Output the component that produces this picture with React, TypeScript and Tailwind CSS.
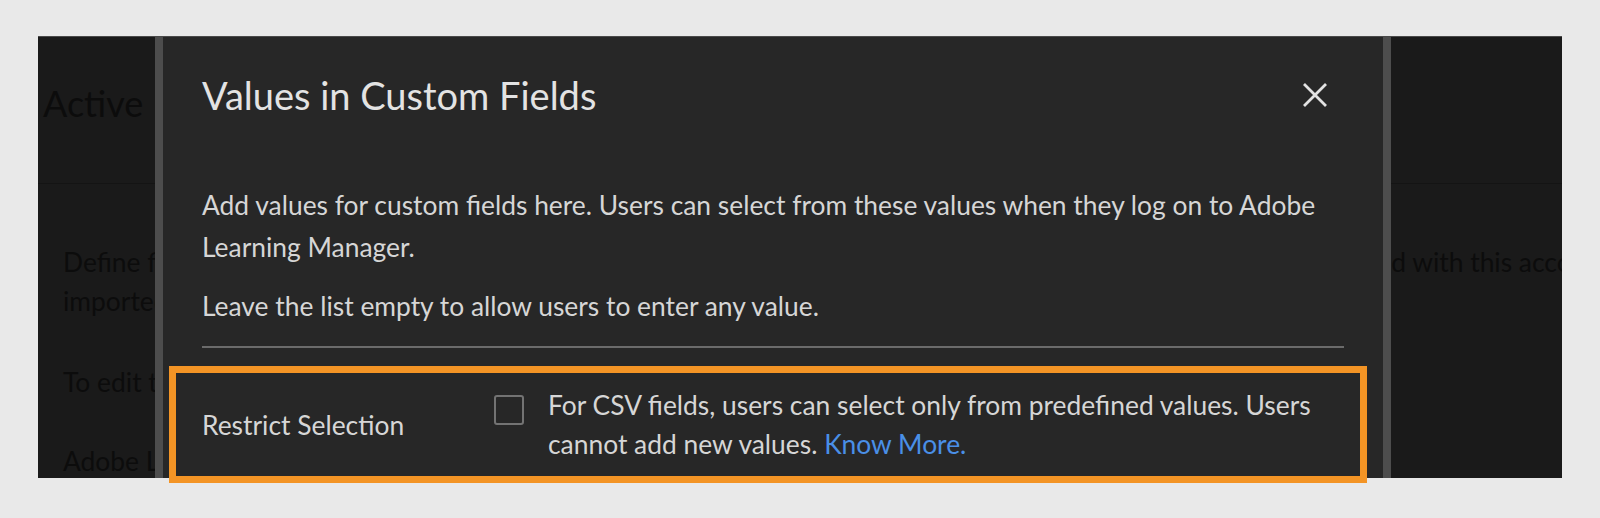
export default function App() {
  return (
    <div className="relative w-[1600px] h-[518px] bg-[#e9e9e9] pt-[36px] pl-[38px] font-['Lato',sans-serif]">
      <div className="relative w-[1524px] h-[442px] overflow-hidden bg-[#1a1a1a] border-t border-[#4a4a4a]">
        <div className="text-[#0c0c0c]">
          <div className="h-[147px] border-b border-[#141414] pl-[5px] pt-[44px] text-[36px] leading-[44px] whitespace-nowrap">
            Active Fields
          </div>
          <div className="pl-[25px] pt-[59px] text-[26.4px] leading-[39px]">
            <p className="whitespace-nowrap">
              Define fields that you want to add to the user profiles. These fields can be set by the administrators or are associated with this account
            </p>
            <p className="whitespace-nowrap">imported from external sources such as CSV files or connectors.</p>
            <p className="mt-[42px] whitespace-nowrap">To edit the values in a field, click the field name.</p>
            <p className="mt-[40px] whitespace-nowrap">Adobe Learning Manager supports active fields.</p>
          </div>
        </div>

        <div className="absolute left-[117px] top-0 w-[1236px] h-[460px] bg-[#272727] border-x-[8px] border-[#4d4d4d] px-[39px] pt-[36px]">
          <div className="h-[44px] flex items-center justify-between">
            <h2 className="text-[38px] leading-[44px] text-[#e3e3e3] whitespace-nowrap">Values in Custom Fields</h2>
            <button className="mr-[16px] w-[26px] h-[26px] flex items-center justify-center">
              <svg width="26" height="26" viewBox="0 0 26 26" fill="none">
                <path d="M2 2 L24 24 M24 2 L2 24" stroke="#e2e2e2" strokeWidth="2.8" />
              </svg>
            </button>
          </div>
          <p className="mt-[67px] -mr-[14px] text-[26.4px] leading-[42px] text-[#d6d6d6]">
            Add values for custom fields here. Users can select from these values when they log on to Adobe Learning Manager.
          </p>
          <p className="mt-[17px] text-[26.4px] leading-[42px] text-[#d6d6d6]">
            Leave the list empty to allow users to enter any value.
          </p>
          <div className="mt-[19px] h-[2px] bg-[#6b6b6b]" />
          <div className="mt-[38px] flex items-center text-[26.4px] leading-[39px] text-[#d6d6d6]">
            <div className="w-[292px] shrink-0">Restrict Selection</div>
            <div className="flex items-start flex-1">
              <div className="mt-[9px] w-[30px] h-[30px] shrink-0 border-2 border-[#737373] rounded-[3px]" />
              <p className="ml-[24px]">
                For CSV fields, users can select only from predefined values. Users cannot add new values.{" "}
                <a className="text-[#4a8fe7]">Know More.</a>
              </p>
            </div>
          </div>
        </div>
      </div>
      <div className="absolute left-[169px] top-[366px] w-[1198px] h-[117px] border-[7px] border-[#f39425]" />
    </div>
  );
}
